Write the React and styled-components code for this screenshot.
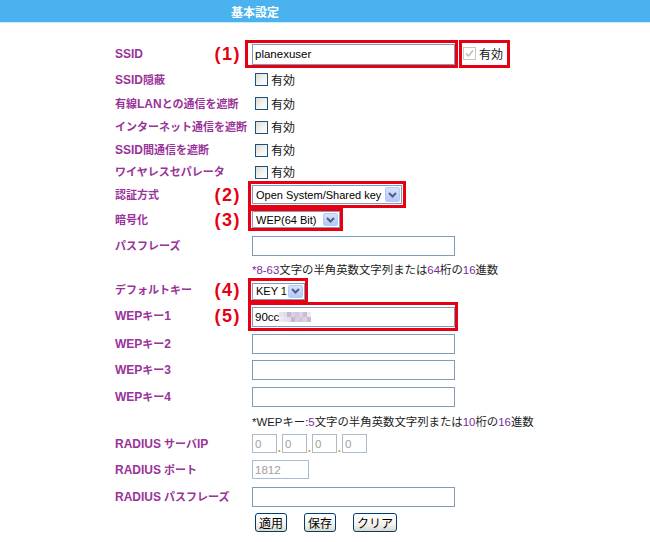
import React from "react";
import styled, { createGlobalStyle } from "styled-components";

const Global = createGlobalStyle`
  html, body { margin: 0; padding: 0; background: #fff; }
  body {
    font-family: "Liberation Sans", "Noto Sans CJK JP", sans-serif;
    font-size: 12px;
    color: #000;
  }
  * { box-sizing: border-box; }
`;

const Page = styled.div`
  width: 650px;
  height: 542px;
  overflow: hidden;
  background: #fff;
`;

const Header = styled.header`
  height: 23px;
  background: #4ab2ee;
  border-bottom: 1px solid #c8edfb;
  display: flex;
  align-items: center;
  padding-left: 231px;
  color: #fff;
  font-weight: bold;
  font-size: 12px;
  font-family: "Noto Sans CJK JP", sans-serif;
`;

const Form = styled.div`
  padding: 17px 0 0 115px;
  display: flex;
  flex-direction: column;
`;

const Row = styled.div`
  display: grid;
  grid-template-columns: 137px 1fr;
  grid-template-rows: minmax(0, 1fr);
  align-items: center;
  height: ${(p) => p.$h}px;
`;

const Label = styled.div`
  display: flex;
  justify-content: space-between;
  align-items: center;
  padding-right: 11px;
  color: #993399;
  font-weight: bold;
  font-size: 11px;
  line-height: 16px;
  white-space: nowrap;
`;

const Latin = styled.span`
  font-size: 12px;
`;

const Mark = styled.span`
  color: #e60012;
  font-size: 18px;
  font-weight: bold;
  letter-spacing: 1.5px;
  line-height: 1;
  font-family: "Liberation Sans", sans-serif;
`;

const Control = styled.div`
  display: flex;
  align-items: center;
  white-space: nowrap;
`;

const Frame = styled.div`
  display: inline-flex;
  align-items: center;
  border: 3px solid #e60012;
  padding: ${(p) => p.$pad || "1px 0 1px 1px"};
  margin-left: ${(p) => p.$ml ?? -4}px;
`;

const Field = styled.div`
  width: ${(p) => p.$w || 203}px;
  height: ${(p) => p.$h || 20}px;
  border: 1px solid ${(p) => (p.$disabled ? "#a9bccf" : "#7f9db9")};
  background: #fff;
  display: flex;
  align-items: center;
  padding-left: 2px;
  font-size: 11.5px;
  color: ${(p) => (p.$disabled ? "#a0a0a0" : "#000")};
`;

const Check = styled.span`
  width: 13px;
  height: 13px;
  margin-left: ${(p) => p.$ml ?? 3}px;
  border: 1px solid ${(p) => (p.$disabled ? "#cbc8bc" : "#1c5180")};
  background: ${(p) =>
    p.$disabled ? "#fff" : "linear-gradient(135deg, #dcdcd7 0%, #f4f4f2 60%, #fff 100%)"};
  display: inline-flex;
  align-items: center;
  justify-content: center;
`;

const CheckText = styled.span`
  margin-left: 3px;
  font-size: 12px;
  line-height: 16px;
  color: #111;
  font-family: "Noto Sans CJK JP", sans-serif;
`;

const Select = styled.div`
  width: ${(p) => p.$w}px;
  height: ${(p) => p.$h || 18}px;
  border: 1px solid #7f9db9;
  background: #fff;
  display: flex;
  align-items: center;
  justify-content: space-between;
  padding: 1px 1px 1px 3px;
  font-size: 11px;
  color: #000;
`;

const Arrow = styled.span`
  width: 15px;
  height: 100%;
  border: 1px solid #b6c8f3;
  border-radius: 2px;
  background: linear-gradient(#d6e2ff, #b4c9f7);
  display: inline-flex;
  align-items: center;
  justify-content: center;
`;

const Note = styled.div`
  font-size: 11.4px;
  color: #222;
  font-family: "Liberation Sans", "Noto Sans CJK JP", sans-serif;
  white-space: nowrap;
`;

const Em = styled.span`
  color: #7b2c9c;
`;

const IpGroup = styled.div`
  display: flex;
  align-items: flex-end;
`;

const Dot = styled.span`
  width: 5px;
  text-align: center;
  color: #e0a020;
  font-size: 12px;
  line-height: 10px;
  font-weight: bold;
`;

const Buttons = styled.div`
  display: flex;
  gap: 17px;
  padding-left: 3px;
`;

const Btn = styled.button`
  height: 19px;
  padding: 0 3px;
  border: 1px solid #003c74;
  border-radius: 3px;
  background: linear-gradient(#ffffff 0%, #f4f3ee 60%, #dcd9cb 100%);
  font-family: "Noto Sans CJK JP", sans-serif;
  font-size: 12px;
  line-height: 15px;
  color: #000;
`;

const Chevron = () => (
  <svg width="9" height="6" viewBox="0 0 9 6">
    <path d="M1 1 L4.5 4.5 L8 1" fill="none" stroke="#4d6185" strokeWidth="2" />
  </svg>
);

const Tick = () => (
  <svg width="9" height="9" viewBox="0 0 9 9">
    <path d="M1 4.5 L3.5 7 L8 1.5" fill="none" stroke="#b8b8b8" strokeWidth="1.4" />
  </svg>
);

const Mosaic = () => {
  const cols = ["#e9e3ec", "#d9cfe0", "#cbbcd6", "#e2dbe8", "#d3c6dc", "#efeaf1", "#c7b6d2", "#ddd3e3"];
  const rects = [];
  for (let c = 0; c < 8; c++) {
    for (let r = 0; r < 2; r++) {
      rects.push(
        <rect key={`${c}-${r}`} x={c * 4} y={r * 5} width="4" height="5" fill={cols[(c * 3 + r * 5) % cols.length]} />
      );
    }
  }
  return (
    <svg width="32" height="10" viewBox="0 0 32 10">
      {rects}
    </svg>
  );
};

const LabelText = ({ text }) =>
  text.split(/([A-Za-z0-9]+(?: [A-Za-z0-9]+)*)/).map((part, i) =>
    /^[A-Za-z0-9]/.test(part) ? <Latin key={i}>{part}</Latin> : <React.Fragment key={i}>{part}</React.Fragment>
  );

const FieldLabel = ({ text, mark }) => (
  <Label>
    <span>
      <LabelText text={text} />
    </span>
    {mark && <Mark>({mark})</Mark>}
  </Label>
);

const SelectBox = ({ w, h, children }) => (
  <Select $w={w} $h={h}>
    <span>{children}</span>
    <Arrow>
      <Chevron />
    </Arrow>
  </Select>
);

const CheckRow = ({ label, h }) => (
  <Row $h={h}>
    <FieldLabel text={label} />
    <Control>
      <Check />
      <CheckText>有効</CheckText>
    </Control>
  </Row>
);

export default function App() {
  return (
    <Page>
      <Global />
      <Header>基本設定</Header>
      <Form>
        <Row $h={27}>
          <FieldLabel text="SSID" mark="1" />
          <Control>
            <Frame $ml={-7} $pad="1px 0 0 4px">
              <Field $h={21}>planexuser</Field>
            </Frame>
            <Frame $ml={1} $pad="3px 4px 3px 1px">
              <Check $disabled $ml={0}>
                <Tick />
              </Check>
              <CheckText>有効</CheckText>
            </Frame>
          </Control>
        </Row>
        <CheckRow h={25} label="SSID隠蔽" />
        <CheckRow h={23} label="有線LANとの通信を遮断" />
        <CheckRow h={24} label="インターネット通信を遮断" />
        <CheckRow h={22} label="SSID間通信を遮断" />
        <CheckRow h={22} label="ワイヤレスセパレータ" />
        <Row $h={23}>
          <FieldLabel text="認証方式" mark="2" />
          <Control>
            <Frame $pad="1px 1px 1px 1px">
              <SelectBox w={150} h={19}>
                Open System/Shared key
              </SelectBox>
            </Frame>
          </Control>
        </Row>
        <Row $h={27}>
          <FieldLabel text="暗号化" mark="3" />
          <Control>
            <Frame $pad="0 0 0 1px">
              <SelectBox w={88} h={17}>
                WEP(64 Bit)
              </SelectBox>
            </Frame>
          </Control>
        </Row>
        <Row $h={25}>
          <FieldLabel text="パスフレーズ" />
          <Control>
            <Field />
          </Control>
        </Row>
        <Row $h={21}>
          <span />
          <Note>
            <Em>*8-63</Em>文字の半角英数文字列または<Em>64</Em>桁の<Em>16</Em>進数
          </Note>
        </Row>
        <Row $h={22}>
          <FieldLabel text="デフォルトキー" mark="4" />
          <Control>
            <Frame $pad="2px 0 0 1px">
              <SelectBox w={53} h={17}>
                KEY 1
              </SelectBox>
            </Frame>
          </Control>
        </Row>
        <Row $h={30}>
          <FieldLabel text="WEPキー1" mark="5" />
          <Control>
            <Frame $pad="2px 0 1px 1px">
              <Field>
                90cc
                <Mosaic />
              </Field>
            </Frame>
          </Control>
        </Row>
        <Row $h={26}>
          <FieldLabel text="WEPキー2" />
          <Control>
            <Field />
          </Control>
        </Row>
        <Row $h={26}>
          <FieldLabel text="WEPキー3" />
          <Control>
            <Field />
          </Control>
        </Row>
        <Row $h={27}>
          <FieldLabel text="WEPキー4" />
          <Control>
            <Field />
          </Control>
        </Row>
        <Row $h={21}>
          <span />
          <Note>
            *WEPキー:<Em>5</Em>文字の半角英数文字列または<Em>10</Em>桁の<Em>16</Em>進数
          </Note>
        </Row>
        <Row $h={25}>
          <FieldLabel text="RADIUS サーバIP" />
          <Control>
            <IpGroup>
              <Field $w={25} $h={19} $disabled>0</Field>
              <Dot>.</Dot>
              <Field $w={25} $h={19} $disabled>0</Field>
              <Dot>.</Dot>
              <Field $w={25} $h={19} $disabled>0</Field>
              <Dot>.</Dot>
              <Field $w={25} $h={19} $disabled>0</Field>
            </IpGroup>
          </Control>
        </Row>
        <Row $h={27}>
          <FieldLabel text="RADIUS ポート" />
          <Control>
            <Field $w={57} $h={19} $disabled>1812</Field>
          </Control>
        </Row>
        <Row $h={27}>
          <FieldLabel text="RADIUS パスフレーズ" />
          <Control>
            <Field />
          </Control>
        </Row>
        <Row $h={24}>
          <span />
          <Buttons>
            <Btn>適用</Btn>
            <Btn>保存</Btn>
            <Btn>クリア</Btn>
          </Buttons>
        </Row>
      </Form>
    </Page>
  );
}
